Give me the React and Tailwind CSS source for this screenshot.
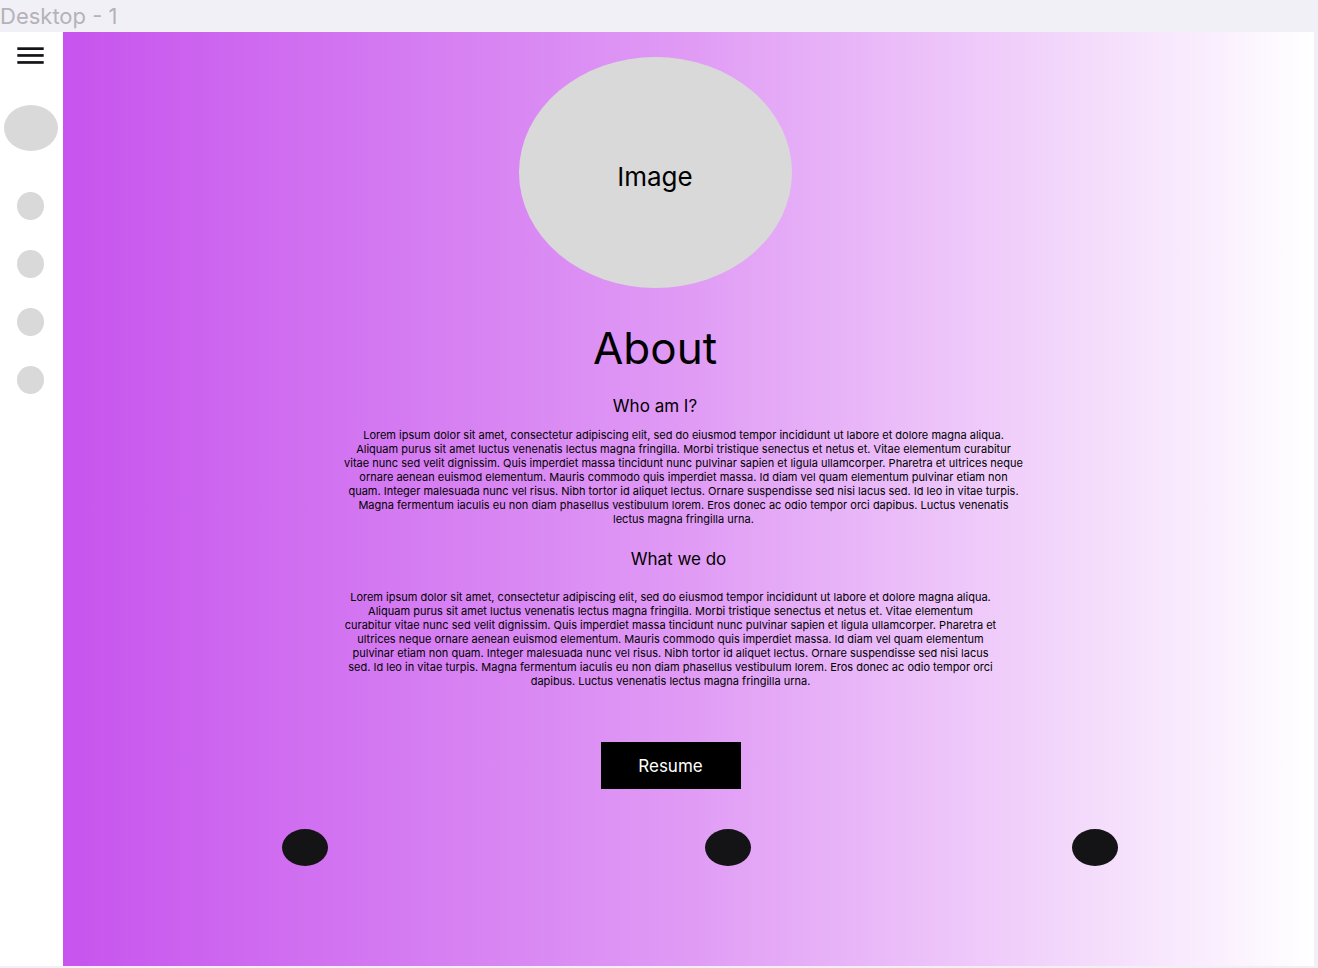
const aboutLines = [
  'Lorem ipsum dolor sit amet, consectetur adipiscing elit, sed do eiusmod tempor incididunt ut labore et dolore magna aliqua.',
  'Aliquam purus sit amet luctus venenatis lectus magna fringilla. Morbi tristique senectus et netus et. Vitae elementum curabitur',
  'vitae nunc sed velit dignissim. Quis imperdiet massa tincidunt nunc pulvinar sapien et ligula ullamcorper. Pharetra et ultrices neque',
  'ornare aenean euismod elementum. Mauris commodo quis imperdiet massa. Id diam vel quam elementum pulvinar etiam non',
  'quam. Integer malesuada nunc vel risus. Nibh tortor id aliquet lectus. Ornare suspendisse sed nisi lacus sed. Id leo in vitae turpis.',
  'Magna fermentum iaculis eu non diam phasellus vestibulum lorem. Eros donec ac odio tempor orci dapibus. Luctus venenatis',
  'lectus magna fringilla urna.',
];

const workLines = [
  'Lorem ipsum dolor sit amet, consectetur adipiscing elit, sed do eiusmod tempor incididunt ut labore et dolore magna aliqua.',
  'Aliquam purus sit amet luctus venenatis lectus magna fringilla. Morbi tristique senectus et netus et. Vitae elementum',
  'curabitur vitae nunc sed velit dignissim. Quis imperdiet massa tincidunt nunc pulvinar sapien et ligula ullamcorper. Pharetra et',
  'ultrices neque ornare aenean euismod elementum. Mauris commodo quis imperdiet massa. Id diam vel quam elementum',
  'pulvinar etiam non quam. Integer malesuada nunc vel risus. Nibh tortor id aliquet lectus. Ornare suspendisse sed nisi lacus',
  'sed. Id leo in vitae turpis. Magna fermentum iaculis eu non diam phasellus vestibulum lorem. Eros donec ac odio tempor orci',
  'dapibus. Luctus venenatis lectus magna fringilla urna.',
];

function Paragraph({ lines }) {
  return (
    <p className="text-center text-[11px] leading-[14px]">
      {lines.map((line) => (
        <span key={line} className="block">
          {line}
        </span>
      ))}
    </p>
  );
}

function Sidebar() {
  return (
    <nav aria-label="Main" className="flex w-[63px] shrink-0 flex-col items-center bg-white pt-[15px] pr-0.5">
      <button type="button" aria-label="Menu" className="h-[18px] w-[27px]">
        <svg viewBox="0 0 27 18" className="block h-full w-full" fill="#141316">
          <rect x="0.3" y="0.3" width="26.4" height="2.7" />
          <rect x="0.3" y="7.1" width="26.4" height="2.7" />
          <rect x="0.3" y="14.1" width="26.4" height="2.7" />
        </svg>
      </button>
      <a href="#profile" aria-label="Profile" className="mt-10 h-[46px] w-[54px] rounded-[50%] bg-[#d9d9d9]" />
      <ul className="mt-[41px] flex flex-col gap-[30px]">
        {['Home', 'About', 'Work', 'Contact'].map((name) => (
          <li key={name}>
            <a
              href={'#' + name.toLowerCase()}
              aria-label={name}
              className="block h-7 w-[27px] rounded-[50%] bg-[#d9d9d9]"
            />
          </li>
        ))}
      </ul>
    </nav>
  );
}

function SocialLink({ name }) {
  return (
    <a
      href={'#' + name.toLowerCase()}
      aria-label={name}
      className="block h-[37px] w-[46px] rounded-[50%] bg-[#141316]"
    />
  );
}

export default function App() {
  return (
    <div className="flex min-h-screen flex-col bg-[#f2f0f7] pr-1 pb-0.5 font-['Inter',sans-serif] text-black">
      <header className="h-8 text-[22px] leading-8 text-[#b5b2b9]">Desktop - 1</header>
      <div className="flex grow">
        <Sidebar />
        <main className="flex min-w-0 grow flex-col bg-linear-to-r/srgb from-[#c754ee] via-[#e09bf5] to-white pt-[25px]">
          <div className="flex flex-col items-center pr-[67px]">
            <div className="flex h-[231px] w-[273px] items-center justify-center rounded-[50%] bg-[#d9d9d9] pt-2 text-[26px] leading-8">
              Image
            </div>
            <h1 className="mt-8 text-[44px] leading-14">About</h1>
            <h2 className="mt-[18px] text-[17px] leading-6">Who am I?</h2>
          </div>
          <div className="mt-2.5 pr-2.5">
            <Paragraph lines={aboutLines} />
          </div>
          <h2 className="mt-[21px] pr-5 text-center text-[17px] leading-6">What we do</h2>
          <div className="mt-[19px] flex flex-col items-center pr-9">
            <Paragraph lines={workLines} />
            <button type="button" className="mt-[54px] h-[47px] w-[140px] bg-black text-[17px] leading-6 text-white">
              Resume
            </button>
          </div>
          <div className="mt-10 grid grid-cols-[219fr_46px_377fr_46px_321fr_46px_196fr]">
            <div className="col-start-2">
              <SocialLink name="Github" />
            </div>
            <div className="col-start-4">
              <SocialLink name="Linkedin" />
            </div>
            <div className="col-start-6">
              <SocialLink name="Email" />
            </div>
          </div>
        </main>
      </div>
    </div>
  );
}
